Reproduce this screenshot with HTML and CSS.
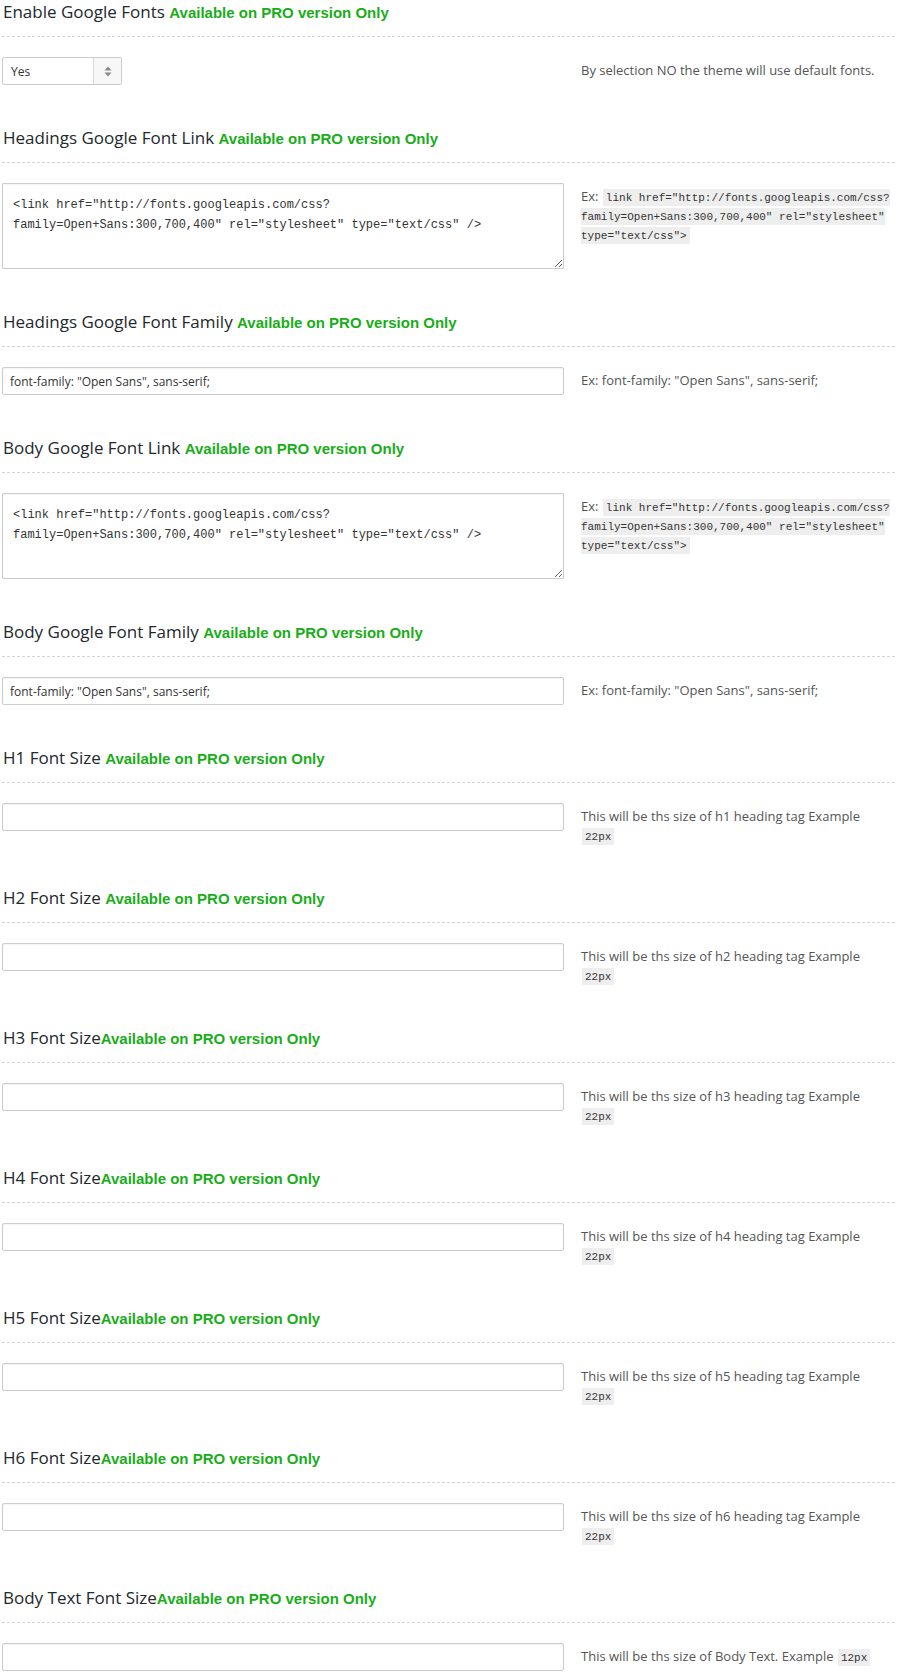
FILE: index.html
```html
<!DOCTYPE html>
<html>
<head>
<meta charset="utf-8">
<link rel="stylesheet" href="styles.css">
</head>
<body>
<div class="options">

  <div class="section">
    <h4 class="heading">Enable Google Fonts <span class="pro">Available on PRO version Only</span></h4>
    <div class="option">
      <div class="controls">
        <div class="select-box">
          <select class="select"><option>Yes</option><option>No</option></select>
          <span class="select-btn"><svg width="8" height="11" viewBox="0 0 8 11"><path d="M4 0.5 L7.5 4.5 L0.5 4.5 Z M4 10.5 L7.5 6.5 L0.5 6.5 Z" fill="#8a8a8a"/></svg></span>
        </div>
      </div>
      <div class="explain">By selection NO the theme will use default fonts.</div>
    </div>
  </div>

  <div class="section">
    <h4 class="heading">Headings Google Font Link <span class="pro">Available on PRO version Only</span></h4>
    <div class="option">
      <div class="controls">
        <textarea class="area">&lt;link href="http://fonts.googleapis.com/css?
family=Open+Sans:300,700,400" rel="stylesheet" type="text/css" /&gt;</textarea>
      </div>
      <div class="explain">Ex: <code>link href="http://fonts.googleapis.com/css?<wbr>family=Open+Sans:300,700,400" rel="stylesheet" type="text/css"&gt;</code></div>
    </div>
  </div>

  <div class="section">
    <h4 class="heading">Headings Google Font Family <span class="pro">Available on PRO version Only</span></h4>
    <div class="option">
      <div class="controls">
        <input class="field" type="text" value='font-family: "Open Sans", sans-serif;'>
      </div>
      <div class="explain">Ex: font-family: "Open Sans", sans-serif;</div>
    </div>
  </div>

  <div class="section">
    <h4 class="heading">Body Google Font Link <span class="pro">Available on PRO version Only</span></h4>
    <div class="option">
      <div class="controls">
        <textarea class="area">&lt;link href="http://fonts.googleapis.com/css?
family=Open+Sans:300,700,400" rel="stylesheet" type="text/css" /&gt;</textarea>
      </div>
      <div class="explain">Ex: <code>link href="http://fonts.googleapis.com/css?<wbr>family=Open+Sans:300,700,400" rel="stylesheet" type="text/css"&gt;</code></div>
    </div>
  </div>

  <div class="section">
    <h4 class="heading">Body Google Font Family <span class="pro">Available on PRO version Only</span></h4>
    <div class="option">
      <div class="controls">
        <input class="field" type="text" value='font-family: "Open Sans", sans-serif;'>
      </div>
      <div class="explain">Ex: font-family: "Open Sans", sans-serif;</div>
    </div>
  </div>

  <div class="section">
    <h4 class="heading">H1 Font Size <span class="pro">Available on PRO version Only</span></h4>
    <div class="option">
      <div class="controls"><input class="field" type="text"></div>
      <div class="explain">This will be ths size of h1 heading tag Example <code>22px</code></div>
    </div>
  </div>

  <div class="section">
    <h4 class="heading">H2 Font Size <span class="pro">Available on PRO version Only</span></h4>
    <div class="option">
      <div class="controls"><input class="field" type="text"></div>
      <div class="explain">This will be ths size of h2 heading tag Example <code>22px</code></div>
    </div>
  </div>

  <div class="section">
    <h4 class="heading">H3 Font Size<span class="pro">Available on PRO version Only</span></h4>
    <div class="option">
      <div class="controls"><input class="field" type="text"></div>
      <div class="explain">This will be ths size of h3 heading tag Example <code>22px</code></div>
    </div>
  </div>

  <div class="section">
    <h4 class="heading">H4 Font Size<span class="pro">Available on PRO version Only</span></h4>
    <div class="option">
      <div class="controls"><input class="field" type="text"></div>
      <div class="explain">This will be ths size of h4 heading tag Example <code>22px</code></div>
    </div>
  </div>

  <div class="section">
    <h4 class="heading">H5 Font Size<span class="pro">Available on PRO version Only</span></h4>
    <div class="option">
      <div class="controls"><input class="field" type="text"></div>
      <div class="explain">This will be ths size of h5 heading tag Example <code>22px</code></div>
    </div>
  </div>

  <div class="section">
    <h4 class="heading">H6 Font Size<span class="pro">Available on PRO version Only</span></h4>
    <div class="option">
      <div class="controls"><input class="field" type="text"></div>
      <div class="explain">This will be ths size of h6 heading tag Example <code>22px</code></div>
    </div>
  </div>

  <div class="section">
    <h4 class="heading">Body Text Font Size<span class="pro">Available on PRO version Only</span></h4>
    <div class="option">
      <div class="controls"><input class="field" type="text"></div>
      <div class="explain">This will be ths size of Body Text. Example <code>12px</code></div>
    </div>
  </div>

</div>
</body>
</html>
```

FILE: styles.css
```css
html, body {
  margin: 0;
  padding: 0;
  background: #ffffff;
}

body {
  font-family: "Open Sans", "Liberation Sans", Arial, sans-serif;
  font-size: 13px;
  color: #444;
}

.options {
  padding: 0 0 0 2px;
}

.section {
  padding-bottom: 41px;
}

.heading {
  margin: 0 2px 20px 0;
  padding: 0 0 11px 1px;
  font-family: "Open Sans", sans-serif;
  font-size: 17px;
  font-weight: 400;
  line-height: 24px;
  color: #23282d;
  border-bottom: 1px dashed #d4d4d4;
}

.pro {
  font-family: "Liberation Sans", Arial, sans-serif;
  font-size: 15px;
  font-weight: 700;
  color: #19ad19;
}

.option {
  display: grid;
  grid-template-columns: 562px 1fr;
  column-gap: 17px;
  align-items: start;
}

.controls {
  display: flex;
}

.select-box {
  display: flex;
  width: 120px;
  height: 28px;
  box-sizing: border-box;
  border: 1px solid #cccccc;
  border-radius: 2px;
  background: #fff;
  overflow: hidden;
}

.select {
  flex: 1;
  min-width: 0;
  -webkit-appearance: none;
  appearance: none;
  border: 0;
  background: transparent;
  margin: 0;
  padding: 0 0 0 8px;
  font-family: "Open Sans", sans-serif;
  font-size: 12px;
  color: #333;
  outline: none;
}

.select-btn {
  width: 27px;
  display: flex;
  align-items: center;
  justify-content: center;
  border-left: 1px solid #d8d8d8;
  background: #f7f7f7;
}

.field {
  width: 562px;
  height: 28px;
  box-sizing: border-box;
  margin: 0;
  padding: 0 7px;
  border: 1px solid #cccccc;
  border-radius: 2px;
  box-shadow: inset 0 1px 2px rgba(0, 0, 0, 0.05);
  font-family: "Open Sans", sans-serif;
  font-size: 12px;
  color: #333;
  background: #fff;
  outline: none;
}

.area {
  width: 562px;
  height: 86px;
  box-sizing: border-box;
  margin: 0;
  padding: 11px 10px 10px;
  border: 1px solid #cccccc;
  border-radius: 1px;
  box-shadow: inset 0 1px 2px rgba(0, 0, 0, 0.05);
  font-family: "Liberation Mono", "DejaVu Sans Mono", monospace;
  font-size: 12px;
  line-height: 20px;
  color: #333;
  background: #fff;
  resize: vertical;
  outline: none;
  display: block;
}

.explain {
  padding-top: 4px;
  font-family: "Open Sans", sans-serif;
  font-size: 13px;
  line-height: 19px;
  color: #555;
}

code {
  font-family: "Liberation Mono", "DejaVu Sans Mono", monospace;
  font-size: 11px;
  line-height: 1;
  background: #eeeeee;
  padding: 3px 3px 2px;
  margin: 0 1px;
  color: #333;
}
```
